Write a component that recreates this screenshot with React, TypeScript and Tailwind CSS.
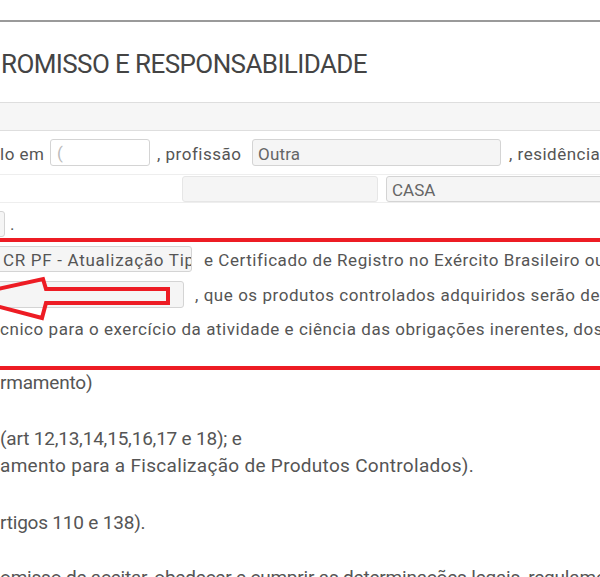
export default function App() {
  return (
    <div className="relative w-[600px] h-[577px] overflow-hidden bg-white font-['Roboto',sans-serif] text-[#555]">
      <div className="h-[20px]" />
      <div className="h-[2px] bg-[#9a9a9a]" />
      <div className="h-[80px] flex items-center pl-[1px] pt-[4px] text-[26px] tracking-[-0.6px] text-[#444]">
        ROMISSO E RESPONSABILIDADE
      </div>
      <div className="h-[29px] bg-[#f6f6f6] border-y border-[#dedede]" />

      <div className="h-[44px] flex items-start pt-[8px] border-b border-[#eeeeee] text-[17px] tracking-[0.5px] whitespace-nowrap">
        <span className="shrink-0 mt-[3px] w-[50px]">lo em</span>
        <div className="shrink-0 w-[100px] h-[27px] border border-[#d4d4d4] rounded-[3px] bg-white pl-[6px] pt-[1px] text-[#bbb]">(</div>
        <span className="shrink-0 mt-[3px] ml-[7px] w-[95px]">, profissão</span>
        <div className="shrink-0 w-[249px] h-[27px] border border-[#d4d4d4] rounded-[3px] bg-[#f5f5f5] pl-[5px] pt-[2px] text-[#666] tracking-[0.2px]">Outra</div>
        <span className="shrink-0 mt-[3px] ml-[8px]">, residência</span>
      </div>

      <div className="h-[28px] flex items-start pt-[1px] border-b border-[#eeeeee] text-[17px] whitespace-nowrap">
        <div className="shrink-0 w-[182px]" />
        <div className="shrink-0 w-[196px] h-[26px] border border-[#e6e6e6] rounded-[3px] bg-[#f5f5f5]" />
        <div className="shrink-0 ml-[8px] w-[230px] h-[26px] border border-[#d4d4d4] rounded-[3px] bg-[#f5f5f5] pl-[5px] pt-[1px] text-[#666]">CASA</div>
      </div>

      <div className="h-[36px] flex items-start pt-[8px] text-[17px]">
        <div className="shrink-0 ml-[-10px] w-[15px] h-[26px] border border-[#d4d4d4] rounded-[3px] bg-[#f5f5f5]" />
        <span className="ml-[5px] mt-[1px]">.</span>
      </div>

      <div className="pt-[7px] text-[17px] tracking-[0.55px] whitespace-nowrap">
        <div className="h-[35px] flex items-start">
          <div className="shrink-0 ml-[-10px] w-[202px] h-[26px] overflow-hidden border border-[#d4d4d4] rounded-[3px] bg-[#f5f5f5] pl-[12px] pt-[1px] text-[#555] tracking-[0.7px]">CR PF - Atualização Tipo</div>
          <span className="shrink-0 ml-[12px] mt-[2px]">e Certificado de Registro no Exército Brasileiro ou</span>
        </div>
        <div className="h-[36px] flex items-start">
          <div className="shrink-0 ml-[-10px] w-[194px] h-[27px] border border-[#d4d4d4] rounded-[3px] bg-[#f5f5f5]" />
          <span className="shrink-0 ml-[11px] mt-[2px]">, que os produtos controlados adquiridos serão de</span>
        </div>
        <div className="h-[22px]">cnico para o exercício da atividade e ciência das obrigações inerentes, dos</div>
      </div>

      <div className="pt-[30px] text-[19px] leading-[27px] tracking-[-0.2px] whitespace-nowrap">
        <div>rmamento)</div>
        <div className="mt-[29px]">(art 12,13,14,15,16,17 e 18); e</div>
        <div className="tracking-[0.3px]">amento para a Fiscalização de Produtos Controlados).</div>
        <div className="mt-[30px]">rtigos 110 e 138).</div>
        <div className="mt-[28px]">omisso de aceitar, obedecer e cumprir as determinações legais, regulamentares</div>
      </div>

      <div className="absolute left-0 top-[238px] w-[600px] h-[4px] bg-[#ed1c24]" />
      <div className="absolute left-0 top-[366px] w-[600px] h-[4px] bg-[#ed1c24]" />
      <svg className="absolute left-0 top-[270px]" width="180" height="60" viewBox="0 270 180 60">
        <polygon
          points="-38,297 43,279 46,289 168,289 168,303 46,303 42,318"
          fill="none"
          stroke="#ed1c24"
          strokeWidth="4"
          strokeLinejoin="miter"
        />
      </svg>
    </div>
  )
}
